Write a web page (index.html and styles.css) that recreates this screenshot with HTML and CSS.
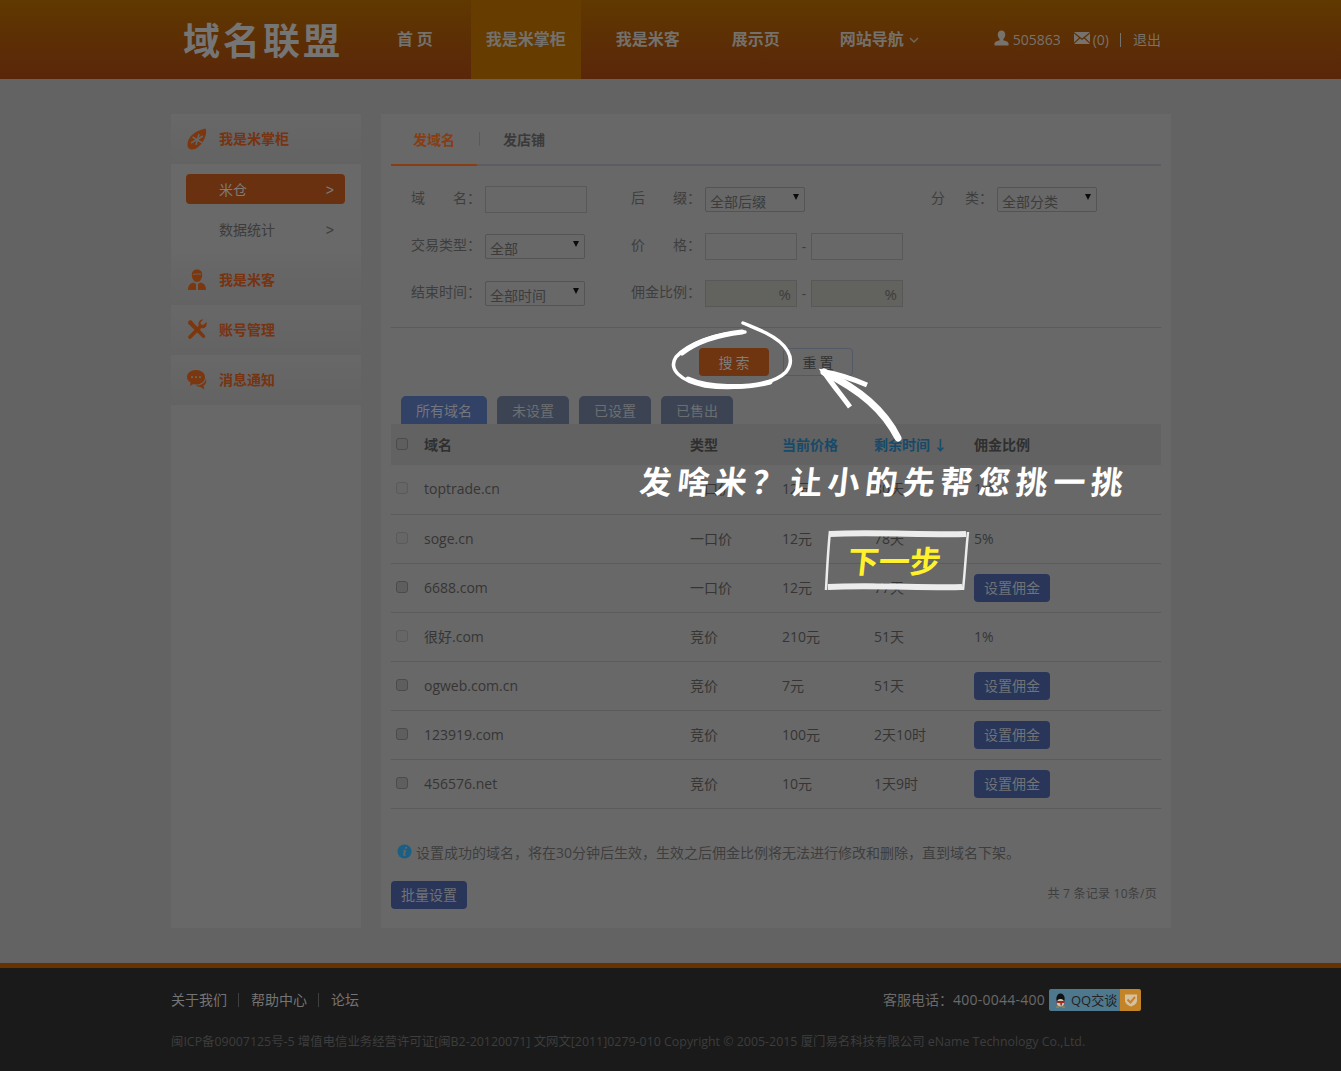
FILE: index.html
```html
<!DOCTYPE html>
<html lang="zh-CN">
<head>
<meta charset="utf-8">
<title>域名联盟</title>
<link rel="stylesheet" href="styles.css">
</head>
<body>
<header class="top">
  <div class="top-inner">
    <div class="logo">域名联盟</div>
    <nav class="nav">
      <a class="nav-item nav-home">首 页</a>
      <a class="nav-item active">我是米掌柜</a>
      <a class="nav-item nav-buyer">我是米客</a>
      <a class="nav-item nav-show">展示页</a>
      <a class="nav-item nav-site">网站导航<svg class="chev" viewBox="0 0 10 6"><path d="M1 1l4 4 4-4" fill="none" stroke="#6e6a60" stroke-width="1.4"/></svg></a>
    </nav>
    <div class="user">
      <svg class="u-icon" viewBox="0 0 16 16"><path d="M8 0c2.600 0 4 2 4 4.500 0 2-1 3.600-2 4.500v1.500c2 .6 4.800 1.300 5.500 3.200V16H.5v-2.300C1.200 11.800 4 11.100 6 10.500V9C5 8.100 4 6.500 4 4.500 4 2 5.400 0 8 0z" fill="#77736c"/></svg>
      <span class="u-id">505863</span>
      <svg class="m-icon" viewBox="0 0 16 12"><path d="M0 0h16L8 6.500zM0 1.500l5 4.200L0 10.500zM16 1.500l-5 4.200 5 4.800zM6 6.500l2 1.600 2-1.600 6 5.500H0z" fill="#77736c"/></svg>
      <span class="u-msg">(0)</span>
      <span class="u-sep"></span>
      <a class="u-exit">退出</a>
    </div>
  </div>
</header>

<main class="main">
  <aside class="side">
    <div class="side-head">
      <svg class="side-icon" viewBox="0 0 20 22"><path d="M18.500.5c1.500 3 .5 8-2.500 13-3 4.500-7 8-11 8-3 0-4.800-2.300-4.500-5.500C1 10 6 3 18.500.5z" fill="#7c370f"/><path d="M12 6l-3 11M5.500 9l10 6M16 8L4 15" stroke="#656565" stroke-width="1.500"/></svg>
      <span>我是米掌柜</span>
    </div>
    <div class="side-sub">
      <a class="sub-item on"><span>米仓</span><i>&gt;</i></a>
      <a class="sub-item"><span>数据统计</span><i>&gt;</i></a>
    </div>
    <div class="side-head">
      <svg class="side-icon" viewBox="0 0 20 22"><path d="M10 .5c3.500 0 5.200 2.300 5.200 5.500 0 3.500-2.200 7-5.200 7S4.800 9.500 4.800 6C4.800 2.800 6.500.5 10 .5z" fill="#7c370f"/><path d="M6.500 13.500l2.500 1.500v6H1c0-4 1.500-6.500 5.500-7.500zM13.500 13.500l-2.500 1.500v6h8c0-4-1.500-6.500-5.500-7.500z" fill="#7c370f"/><path d="M6 5.500c2-.3 5-.8 8-.2" stroke="#656565" stroke-width="1" fill="none"/></svg>
      <span>我是米客</span>
    </div>
    <div class="side-head">
      <svg class="side-icon" viewBox="0 0 20 22"><path d="M1.500 2L4 1l14 15.500c1 1.200-1 3.500-2.300 2.300L1 4.500z" fill="#7c370f"/><path d="M19.500 3l-3.200 3-2.300-.5-.5-2.300L16.500.5C13 0 10.500 3 11.800 6.500L1.500 17c-1.300 1.500 1 3.800 2.500 2.500L14.500 9c3 1 6-1.500 5-6z" fill="#7c370f"/></svg>
      <span>账号管理</span>
    </div>
    <div class="side-head">
      <svg class="side-icon" viewBox="0 0 20 22"><path d="M9 1c5 0 9 3 9 7.200s-4 7.300-9 7.300c-1 0-2-.1-2.800-.4L3 17l.6-3.400C1.500 12.300 0 10.400 0 8.200 0 4 4 1 9 1z" fill="#7c370f"/><path d="M19 9.500c1 3-.2 5.800-2.500 7.200l.8 3.800-4.300-2.800c-1.600.2-3-.2-4.200-1 5.500 0 9.800-3 10.200-7.200z" fill="#7c370f"/><circle cx="5" cy="8.200" r="1.100" fill="#656565"/><circle cx="9" cy="8.200" r="1.100" fill="#656565"/><circle cx="13" cy="8.200" r="1.100" fill="#656565"/></svg>
      <span>消息通知</span>
    </div>
  </aside>

  <section class="card">
    <div class="tabs">
      <a class="tab on">发域名</a>
      <span class="tab-sep"></span>
      <a class="tab">发店铺</a>
    </div>

    <form class="filters">
      <div class="f-row">
        <label class="f-label"><span>域</span><span>名<b class="pn">：</b></span></label>
        <input class="inp inp-name">
        <label class="f-label f-b"><span>后</span><span>缀<b class="pn">：</b></span></label>
        <span class="sel"><select><option>全部后缀</option></select></span>
        <label class="f-label f-c"><span>分</span><span>类<b class="pn">：</b></span></label>
        <span class="sel"><select><option>全部分类</option></select></span>
      </div>
      <div class="f-row">
        <label class="f-label"><span>交易类型<b class="pn">：</b></span></label>
        <span class="sel"><select><option>全部</option></select></span>
        <label class="f-label f-b2"><span>价</span><span>格<b class="pn">：</b></span></label>
        <input class="inp inp-num">
        <span class="dash">-</span>
        <input class="inp inp-num">
      </div>
      <div class="f-row">
        <label class="f-label"><span>结束时间<b class="pn">：</b></span></label>
        <span class="sel"><select><option>全部时间</option></select></span>
        <label class="f-label f-b2"><span>佣金比例<b class="pn">：</b></span></label>
        <span class="inp inp-num pct">%</span>
        <span class="dash">-</span>
        <span class="inp inp-num pct">%</span>
      </div>
    </form>

    <div class="actions">
      <button class="btn-search" type="button">搜 索</button>
      <button class="btn-reset" type="button">重 置</button>
    </div>

    <div class="pills">
      <a class="pill on">所有域名</a>
      <a class="pill">未设置</a>
      <a class="pill">已设置</a>
      <a class="pill">已售出</a>
    </div>

    <table class="list">
      <thead>
        <tr>
          <th class="c-check"><input type="checkbox" class="chk"></th>
          <th class="c-name">域名</th>
          <th class="c-type">类型</th>
          <th class="c-price sort">当前价格</th>
          <th class="c-time sort">剩余时间 ↓</th>
          <th class="c-rate">佣金比例</th>
        </tr>
      </thead>
      <tbody>
        <tr><td><input type="checkbox" class="chk off"></td><td>toptrade.cn</td><td>一口价</td><td>12元</td><td>80天</td><td>1%</td></tr>
        <tr><td><input type="checkbox" class="chk off"></td><td>soge.cn</td><td>一口价</td><td>12元</td><td>78天</td><td>5%</td></tr>
        <tr><td><input type="checkbox" class="chk"></td><td>6688.com</td><td>一口价</td><td>12元</td><td>77天</td><td><a class="btn-blue">设置佣金</a></td></tr>
        <tr><td><input type="checkbox" class="chk off"></td><td>很好.com</td><td>竞价</td><td>210元</td><td>51天</td><td>1%</td></tr>
        <tr><td><input type="checkbox" class="chk"></td><td>ogweb.com.cn</td><td>竞价</td><td>7元</td><td>51天</td><td><a class="btn-blue">设置佣金</a></td></tr>
        <tr><td><input type="checkbox" class="chk"></td><td>123919.com</td><td>竞价</td><td>100元</td><td>2天10时</td><td><a class="btn-blue">设置佣金</a></td></tr>
        <tr><td><input type="checkbox" class="chk"></td><td>456576.net</td><td>竞价</td><td>10元</td><td>1天9时</td><td><a class="btn-blue">设置佣金</a></td></tr>
      </tbody>
    </table>

    <p class="note">
      <svg class="i-icon" viewBox="0 0 16 16"><circle cx="8" cy="8" r="7.500" fill="#1b5f82"/><path d="M8.800 3.200h2l-.4 1.800h-2zM7.400 6.500h2.300L8.600 11.200c-.1.500.3.500 1.200.1l-.2.900c-1.400.7-3.400.8-3.100-.9l.8-3.900-.9-.1z" fill="#656565"/></svg>
      <span>设置成功的域名<b class="pn">，</b>将在30分钟后生效<b class="pn">，</b>生效之后佣金比例将无法进行修改和删除<b class="pn">，</b>直到域名下架<b class="pn">。</b></span>
    </p>

    <div class="bottom">
      <a class="btn-blue btn-batch">批量设置</a>
      <span class="count">共 7 条记录 10条/页</span>
    </div>
  </section>
</main>

<footer class="foot">
  <div class="foot-inner">
    <div class="foot-top">
      <div class="foot-links">
        <a>关于我们</a><span></span><a>帮助中心</a><span></span><a>论坛</a>
      </div>
      <div class="foot-tel">
        <span>客服电话<b class="pn">：</b><em class="tel-no">400-0044-400</em></span>
        <div class="qq">
          <span class="qq-main">
            <svg class="qq-icon" viewBox="0 0 14 16"><ellipse cx="7" cy="6" rx="4.500" ry="5.500" fill="#111"/><ellipse cx="7" cy="10.500" rx="3.800" ry="4" fill="#c9c9b8"/><path d="M2.800 8.500h8.400l.3 1.800-3 .6v2.500h-1.600V11l-4.300-.7z" fill="#a8261c"/><path d="M2 14.500h4l-1 1.300H2.500zM12 14.500H8l1 1.300h2.500z" fill="#b9802a"/></svg>
            QQ交谈
          </span>
          <span class="qq-check"><svg viewBox="0 0 14 14"><path d="M1 1.500h12v6c0 3-3 5-6 6-3-1-6-3-6-6z" fill="#d5c1a0"/><path d="M3.500 6.500l3 3 4.500-5.500" fill="none" stroke="#c8812a" stroke-width="2"/></svg></span>
        </div>
      </div>
    </div>
    <p class="copy">闽ICP备09007125号-5 增值电信业务经营许可证[闽B2-20120071] 文网文[2011]0279-010 Copyright © 2005-2015 厦门易名科技有限公司 eName Technology Co.,Ltd.</p>
  </div>
</footer>

<div class="guide">
  <svg class="guide-ink" viewBox="0 0 1341 1071">
    <path class="ink-thin" d="M745 332C715 333 688 344 676 357C668 369 680 381 705 386C735 390 772 386 786 372C797 358 786 343 766 333C758 329 750 326 743 323"/>
    <path class="ink-bold" d="M742 332C716 335 695 343 682 353"/>
    <path class="ink-bold" d="M688 379C708 388 745 389 770 382"/>
    <path class="ink-arrow" d="M898 438C884 410 860 390 824 372"/>
    <path class="ink-head" d="M850 407C842 396 832 384 824 372C838 374 853 379 867 385"/>
    <path class="ink-box" d="M830 534C870 532 925 535 966 534"/>
    <path class="ink-box" d="M828 587C870 585 925 588 962 587"/>
    <path class="ink-side" d="M830 531C828 550 827 570 826 590"/>
    <path class="ink-side" d="M968 532C966 552 965 570 963 590"/>
  </svg>
  <div class="guide-text">发啥米？让小的先帮您挑一挑</div>
  <a class="guide-next">下一步</a>
</div>
</body>
</html>
```

FILE: styles.css
```css
* { box-sizing: border-box; }
html, body { margin: 0; padding: 0; }
body {
  position: relative;
  width: 1341px;
  height: 1071px;
  overflow: hidden;
  background: #636363;
  color: #363534;
  font: 14px/1.4 "Open Sans", "Noto Sans CJK SC", sans-serif;
}
a { color: inherit; text-decoration: none; }
p { margin: 0; }
.pn { font-family: "Noto Sans CJK TC", sans-serif; font-weight: 400; }

/* header */
.top { height: 79px; background: linear-gradient(#603800, #5a260a); }
.top-inner { width: 1001px; height: 79px; margin-left: 171px; display: flex; align-items: center; }
.logo {
  width: 211px;
  padding-left: 12px;
  font: 700 37px/79px "Noto Sans CJK SC", sans-serif;
  letter-spacing: 3px;
  color: #757575;
  white-space: nowrap;
}
.nav { display: flex; height: 79px; font: 700 16px/77px "Noto Sans CJK SC", sans-serif; color: #74716c; }
.nav-item { display: block; padding: 0 15px; white-space: nowrap; }
.nav-home { margin-right: 23px; }
.nav-item.active { background: #663c00; }
.nav-buyer { margin-left: 20px; }
.nav-show { margin-left: 22px; }
.nav-site { margin-left: 30px; display: flex; align-items: center; padding: 0 0 2px 15px; }
.chev { width: 10px; height: 6px; margin: 3px 0 0 5px; }
.user { display: flex; align-items: center; margin-left: 75px; color: #77736c; font-size: 14px; white-space: nowrap; }
.u-icon { width: 15px; height: 16px; margin-top: -4px; }
.u-id { margin-left: 4px; }
.m-icon { width: 16px; height: 12px; margin: -3px 0 0 13px; }
.u-msg { margin-left: 3px; }
.u-sep { width: 1px; height: 14px; margin: 0 12px 0 11px; background: #77736c; }

/* layout */
.main { display: flex; height: 884px; padding: 35px 0 0 171px; gap: 20px; }
.side { width: 190px; height: 814px; background: #686868; }
.side-head {
  display: flex; align-items: center; height: 50px; padding-left: 16px;
  background: linear-gradient(#686868, #636363);
  font-weight: 700; color: #783310; font-size: 14px;
  font-family: "Noto Sans CJK SC", sans-serif;
}
.side-icon { width: 20px; height: 22px; margin-right: 12px; flex: none; }
.side-sub { height: 91px; padding: 10px 15px 0; background: #696969; }
.sub-item { display: flex; justify-content: space-between; align-items: center; width: 159px; height: 30px; margin-bottom: 10px; padding: 2px 11px 0 33px; border-radius: 4px; color: #3c3c3c; }
.sub-item i { font: 14px "Liberation Sans", sans-serif; }
.sub-item.on { background: #6a3110; color: #7c7c78; }

.card { width: 790px; height: 814px; padding: 0 10px; background: #686868; }
.tabs { display: flex; align-items: center; height: 52px; border-bottom: 2px solid #5c5c62; font: 700 14px "Noto Sans CJK SC", sans-serif; color: #3a3a3a; }
.tab { padding: 0 22px; line-height: 50px; }
.tab.on { color: #8a3c12; margin-bottom: -2px; height: 52px; border-bottom: 2px solid #8a3c12; }
.tab-sep { width: 1px; height: 14px; margin: 0 1px; background: #5a5a5a; }
.tab.on + .tab-sep { margin-left: 2px; }

/* filters */
.filters { display: flex; flex-direction: column; gap: 20px; height: 162px; padding: 20px 0 0 20px; border-bottom: 1px solid #5b5b5b; }
.f-row { display: flex; align-items: center; height: 27px; }
.f-label { display: flex; justify-content: space-between; width: 74px; padding-right: 4px; color: #3e3e3e; font-size: 14px; white-space: nowrap; margin-top: -4px; }
.f-b { margin-left: 44px; }
.f-b2 { margin-left: 46px; }
.f-c { margin-left: 126px; width: 66px; }
.inp { height: 27px; border: 1px solid #585858; background: #686868; padding: 0; display: block; }
.inp-name { width: 102px; }
.inp-num { width: 92px; }
.pct { background: #62625e; text-align: right; padding-right: 5px; font-size: 15px; line-height: 27px; color: #3e3e3e; }
.dash { width: 14px; text-align: center; color: #3e3e3e; }
.sel { position: relative; display: block; width: 100px; height: 25px; }
.sel::after {
  content: ""; position: absolute; right: 6px; top: 7px;
  border-left: 3px solid transparent; border-right: 3px solid transparent; border-top: 6px solid #0c0c0c;
}
.sel select {
  appearance: none; -webkit-appearance: none;
  display: block; width: 100%; height: 25px;
  padding: 2px 0 0 4px; border: 1px solid #545454; border-radius: 2px;
  background: #686868; color: #3c3c3c;
  font: 14px "Noto Sans CJK SC", sans-serif;
}

/* actions */
.actions { display: flex; justify-content: center; gap: 14px; height: 68px; padding: 20px 0 0 0; }
button { font: 14px "Noto Sans CJK SC", sans-serif; cursor: pointer; padding: 0; }
.btn-search { width: 70px; height: 28px; border: 0; border-radius: 4px; background: #6f3410; color: #807c78; }
.btn-reset { width: 70px; height: 28px; border: 1px solid #535a66; border-radius: 4px; background: #686868; color: #333; }

.pills { display: flex; gap: 10px; padding-left: 10px; height: 28px; }
.pill { padding: 0 15px; background: #3c4454; color: #6c6f71; border-radius: 5px 5px 0 0; line-height: 30px; }
.pill.on { background: #324166; color: #73777d; }

/* table */
.list { width: 770px; border-collapse: collapse; table-layout: fixed; }
.list th, .list td { padding: 0; text-align: left; font-size: 14px; font-weight: 400; }
.list thead tr { height: 41px; background: #626262; }
.list th { font-weight: 700; color: #2f2f2f; font-family: "Noto Sans CJK SC", sans-serif; padding-top: 1px; }
.list th.sort { color: #174a68; }
.list tbody tr { height: 49px; border-bottom: 1px solid #5b5b5b; }
.c-check { width: 33px; }
.c-name { width: 266px; }
.c-type { width: 92px; }
.c-price { width: 92px; }
.c-time { width: 100px; }
.chk {
  appearance: none; -webkit-appearance: none;
  display: block; width: 12px; height: 12px; margin: -2px 0 0 5px;
  border: 1px solid #4b4b4b; border-radius: 3px; background: #5e5e5e;
}
.chk.off { border-color: #5a5a5a; background: #666; }
.btn-blue { display: inline-block; width: 76px; height: 28px; line-height: 28px; text-align: center; border-radius: 4px; background: #29365a; color: #707376; vertical-align: middle; }

.note { display: flex; align-items: center; height: 20px; margin-top: 34px; padding-left: 6px; color: #3e3e3e; white-space: nowrap; }
.i-icon { width: 15px; height: 15px; margin-right: 4px; flex: none; margin-top: -2px; }
.bottom { display: flex; justify-content: space-between; align-items: center; margin-top: 18px; height: 28px; }
.count { font-size: 12px; color: #3e3e3e; padding-right: 4px; letter-spacing: .25px; }

/* footer */
.foot { height: 108px; border-top: 5px solid #683200; background: #1a1a1a; }
.foot-inner { width: 970px; margin-left: 171px; padding-top: 21px; }
.foot-top { display: flex; justify-content: space-between; align-items: center; height: 22px; }
.foot-links { display: flex; align-items: center; color: #747474; }
.foot-links span { width: 1px; height: 14px; margin: 0 12px 0 11px; background: #3e3e3e; }
.foot-tel { display: flex; align-items: center; color: #6a6a6a; gap: 4px; white-space: nowrap; }
.tel-no { font-style: normal; letter-spacing: .25px; }
.qq { display: flex; width: 92px; height: 22px; }
.qq-main { display: flex; align-items: center; flex: 1; padding-left: 5px; background: #4e788e; color: #222; font-size: 13px; border-radius: 2px 0 0 2px; }
.qq-icon { width: 13px; height: 15px; margin-right: 4px; }
.qq-check { display: flex; align-items: center; justify-content: center; width: 21px; background: #c38427; border-radius: 0 2px 2px 0; }
.qq-check svg { width: 14px; height: 14px; }
.copy { margin-top: 22px; font-size: 12.4px; color: #3d3d3d; white-space: nowrap; }

/* tour overlay */
.guide { position: absolute; inset: 0; pointer-events: none; }
.guide-ink { position: absolute; left: 0; top: 0; width: 1341px; height: 1071px; fill: none; stroke: #fff; stroke-linecap: round; }
.ink-thin { stroke-width: 3.500; }
.ink-bold { stroke-width: 5; }
.ink-arrow { stroke-width: 7; }
.ink-head { stroke-width: 5; stroke-linecap: butt; stroke-linejoin: miter; }
.ink-box { stroke: #ececec; stroke-width: 6; stroke-linecap: butt; }
.ink-side { stroke: #ececec; stroke-width: 2.500; stroke-linecap: butt; }
.guide-text {
  position: absolute; left: 640px; top: 457px;
  font: 700 32px/46px "Noto Sans CJK SC", sans-serif;
  letter-spacing: 5.600px; color: #fff; white-space: nowrap; transform: skewX(-6deg);
}
.guide-next {
  position: absolute; left: 848px; top: 539px;
  font: 700 31px/42px "Noto Sans CJK SC", sans-serif;
  color: #fff22c; white-space: nowrap; transform: skewX(-6deg);
}
```
